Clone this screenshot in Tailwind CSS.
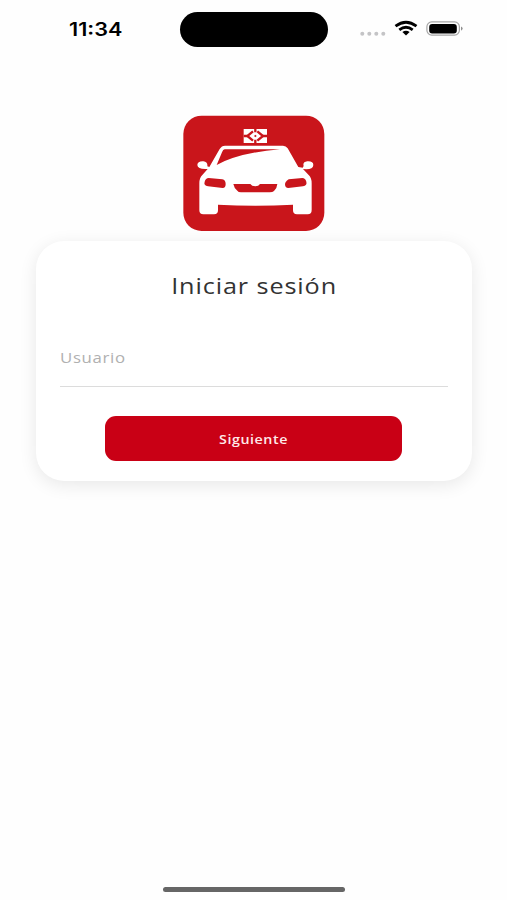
<!DOCTYPE html>
<html lang="es">
<head>
  <meta charset="UTF-8">
  <meta name="viewport" content="width=device-width, initial-scale=1.0">
  <title>Iniciar sesión</title>
  <script src="https://cdn.jsdelivr.net/npm/@tailwindcss/browser@4"></script>
</head>
<body class="h-screen bg-[#fefefe] flex flex-col items-center overflow-hidden font-['Open_Sans',sans-serif]">

  <!-- Barra de estado -->
  <header class="w-full h-[47px] pt-3 flex items-start">
    <div class="w-[180px] pl-[69px] pt-[6px]">
      <span class="block w-fit origin-left scale-x-[1.2] font-['Inter',sans-serif] font-semibold text-[18px] leading-6 text-black">11:34</span>
    </div>
    <div class="w-[148px] h-[35px] shrink-0 rounded-full bg-black"></div>
    <div class="flex items-start pl-8 pt-2">
      <svg class="w-[26px] h-[18px]" viewBox="0 0 26 18" fill="#c4c4c6">
        <circle cx="2.3" cy="13.7" r="2"/><circle cx="9.3" cy="13.7" r="2"/><circle cx="16.3" cy="13.7" r="2"/><circle cx="23.3" cy="13.7" r="2"/>
      </svg>
      <svg class="w-[24px] h-[16px] ml-[8px]" viewBox="0 0 24 16" fill="none" stroke="#000" stroke-width="2.8">
        <path d="M1.5 6.2Q12 -1.8 22.5 6.2"/>
        <path d="M5.3 9.8Q12 4.7 18.7 9.8"/>
        <path d="M8.4 12Q12 9.4 15.6 12L12 15.6Z" fill="#000" stroke="none"/>
      </svg>
      <svg class="w-[38px] h-[16px] ml-2" viewBox="0 0 38 16">
        <rect x=".9" y="1.9" width="32.5" height="13.2" rx="4.8" fill="none" stroke="#a5a5a5" stroke-width="1.2"/>
        <rect x="3.2" y="4" width="27.6" height="9.4" rx="3" fill="#000"/>
        <path d="M35.2 6.5Q38 8.5 35.2 10.7Z" fill="#777"/>
      </svg>
    </div>
  </header>

  <!-- Logo -->
  <svg class="w-[142px] h-[116px] mt-[68px] shrink-0" viewBox="24 30 426 348">
    <rect x="25" y="32" width="423" height="346" rx="55" fill="#c9151b"/>
    <path d="M206 72H276V114H206Z" fill="#fff"/>
    <g fill="none" stroke="#c9151b" stroke-width="7">
      <path d="M234 79L217 93L234 107M247 79L264 93L247 107"/>
      <path d="M241 72V82M241 104V114M206 93H218M263 93H276"/>
    </g>
    <path d="M241 89L245 93L241 97L237 93Z" fill="#c9151b"/>
    <path d="M150 122H324Q333 122 338 130L370 186L383 188L386 183Q382 171 397 169Q415 168 415 180Q414 193 394 193L384 192L401 210Q410 218 410 235V315Q410 328 398 328H366Q354 328 354 316V299Q241 305 129 299V316Q129 328 117 328H85Q73 328 73 316V235Q73 218 82 210L98 192Q68 194 67 180Q68 168 85 169Q99 171 97 184L103 186L134 132Q140 122 150 122Z" fill="#fff"/>
    <g fill="#c9151b">
      <path d="M149 133H315Q192 143 125 180L141 142Q144 133 149 133Z"/>
      <path d="M101 219L142 223Q152 225 152 237Q152 249 143 249L99 244Q85 241 89 230Q92 219 101 219Z"/>
      <path d="M382 219L341 223Q330 230 330 238Q330 249 340 249L384 244Q397 241 394 230Q391 219 382 219Z"/>
      <path d="M175 237H226Q230 244 241 244Q251 244 255 237H307Q306 250 297 258Q293 262 284 262H198Q190 262 187 257Q177 249 175 237Z"/>
    </g>
  </svg>

  <!-- Tarjeta de acceso -->
  <main class="w-[436px] h-[240px] mt-[10px] px-6 rounded-[28px] bg-white shadow-[0_4px_18px_rgba(0,0,0,0.09)] flex flex-col items-center shrink-0">
    <h1 class="mt-[29px] pl-px whitespace-nowrap scale-x-[1.12] text-[22.5px] leading-8 tracking-[0.8px] text-[#333]">Iniciar sesión</h1>
    <label class="w-full h-[50px] mt-[35px] border-b border-[#dcdcdc] pt-2 leading-6 text-[#b0b0b0]">
      <span class="block w-fit origin-left scale-x-[1.12] text-[15px] tracking-[0.6px]">Usuario</span>
    </label>
    <button class="w-[297px] h-[45px] mt-[29px] pt-[2px] rounded-[11px] bg-[#c90015] text-[#ffe9e9]">
      <span class="block scale-x-[1.1] text-[13px] font-semibold tracking-[0.5px]">Siguiente</span>
    </button>
  </main>

  <div class="w-[182px] h-[5px] mt-auto mb-[8px] rounded-full bg-[#666]"></div>
</body>
</html>
